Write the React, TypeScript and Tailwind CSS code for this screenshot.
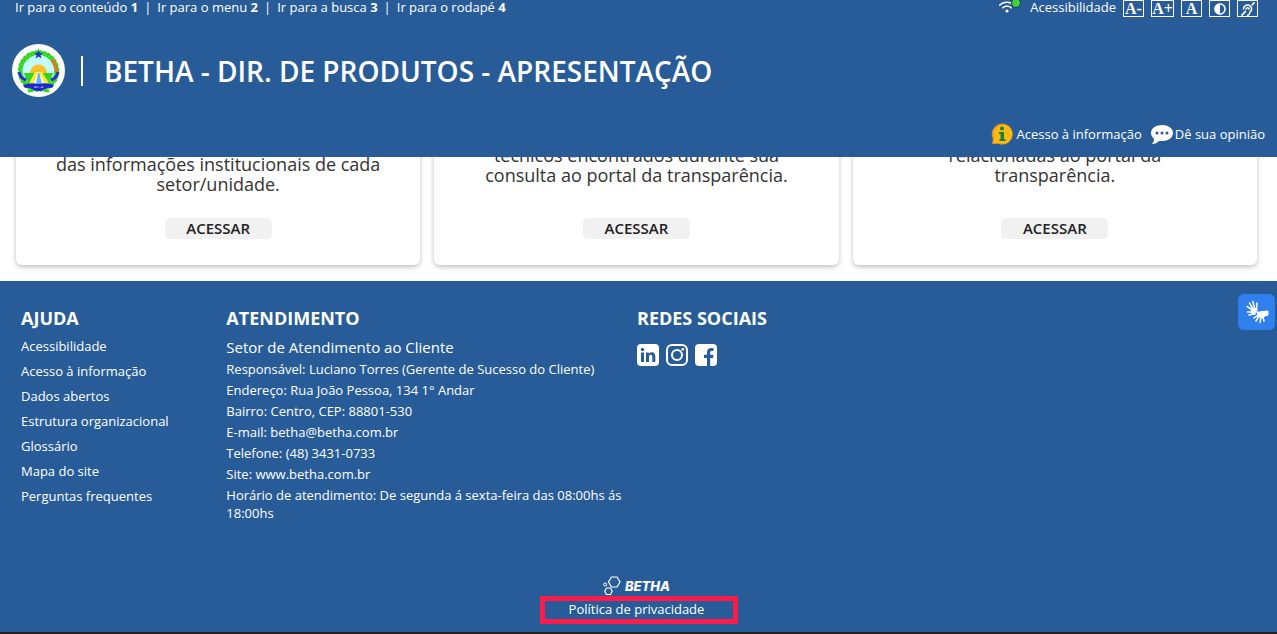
import React from 'react';
import { FaAdjust, FaDeaf } from 'react-icons/fa';
import { FaWifi } from 'react-icons/fa6';

const skipLinks = [
  { label: 'Ir para o conteúdo', key: '1', href: '#conteudo' },
  { label: 'Ir para o menu', key: '2', href: '#menu' },
  { label: 'Ir para a busca', key: '3', href: '#busca' },
  { label: 'Ir para o rodapé', key: '4', href: '#rodape' },
];

const cards = [
  { lines: ['das informações institucionais de cada', 'setor/unidade.'], spacing: 'pt-[13px]' },
  { lines: ['técnicos encontrados durante sua', 'consulta ao portal da transparência.'], spacing: 'pt-1' },
  { lines: ['relacionadas ao portal da', 'transparência.'], spacing: 'pt-1' },
];

const helpLinks = [
  'Acessibilidade',
  'Acesso à informação',
  'Dados abertos',
  'Estrutura organizacional',
  'Glossário',
  'Mapa do site',
  'Perguntas frequentes',
];

const contactLines = [
  'Responsável: Luciano Torres (Gerente de Sucesso do Cliente)',
  'Endereço: Rua João Pessoa, 134 1° Andar',
  'Bairro: Centro, CEP: 88801-530',
  'E-mail: betha@betha.com.br',
  'Telefone: (48) 3431-0733',
  'Site: www.betha.com.br',
  'Horário de atendimento: De segunda á sexta-feira das 08:00hs ás 18:00hs',
];

const Crest = () => (
  <svg viewBox="0 0 53 53" className="w-[53px] h-[53px] shrink-0" aria-hidden="true">
    <circle cx="26.5" cy="26.5" r="26.5" fill="#fff" />
    <circle cx="26.5" cy="27" r="17" fill="#c4fbfb" />
    <path d="M18 29a8.500 8.500 0 0 1 17 0z" fill="#fbc02a" />
    <path d="M12 29h29l-4 12H16z" fill="#34d426" />
    <path d="M25 28h3l8 13H17z" fill="#fff" />
    <path d="M23 28l-6 11 4 1 5-12zM30 28l7 11-4 1-6-12z" fill="#f7ee2c" />
    <path d="M26 29h1.500l2.500 12h-6z" fill="#62b2f5" />
    <circle cx="26.5" cy="27" r="18" fill="none" stroke="#32d622" strokeWidth="4" />
    <circle cx="26.5" cy="27" r="20" fill="none" stroke="#32d622" strokeWidth="1.500" strokeDasharray="3 1.500" />
    <circle cx="26.5" cy="27" r="17.500" fill="none" stroke="#8af07c" strokeWidth="1" strokeDasharray="1 3" />
    <path d="M40 16q5 6 4 12" fill="none" stroke="#e87422" strokeWidth="4" strokeDasharray="3 0.700" />
    <path d="M26.500 6l1.500 3h3l-2.500 2 1 3.500-3-2-3 2 1-3.500-2.500-2h3z" fill="#2434c8" />
    <path d="M26.500 4l1 3h-2z" fill="#32d622" />
    <path d="M7 28q1 6 7 8M46 28q-1 6-7 8" fill="none" stroke="#2433d0" strokeWidth="3" />
    <path d="M11 41q8-3 15.500-1 7.500-2 15.500 1l-2 3q-5-1-8 2-5 2-11 0-3-3-8-2z" fill="#2028d0" />
    <path d="M22 43.500l2-1v1.500M26 42.500v1.500M29 44l1-1.500 1 1.500" fill="none" stroke="#d5dcff" strokeWidth="0.800" />
    <path d="M16 47l5-.5M37 47l-5-.5" stroke="#32d622" strokeWidth="3" />
  </svg>
);

const InfoIcon = () => (
  <svg viewBox="0 0 22 22" className="w-[22px] h-[22px]" aria-hidden="true">
    <path d="M1 21l1-5A10.500 10.500 0 1 1 8 21z" fill="#d9902a" />
    <path d="M2 20l1-5a9.500 9.500 0 1 1 5 5z" fill="#fdb90d" />
    <circle cx="11" cy="5.500" r="2" fill="#168046" />
    <path d="M8 9h5v7h1.500v2h-6v-2H9.500v-5H8z" fill="#168046" />
  </svg>
);

const ChatIcon = () => (
  <svg viewBox="0 0 23 20" className="w-[23px] h-5" aria-hidden="true">
    <path d="M12 1c6 0 11 3 11 8s-5 8-11 8l-3 0c-2 2-4 3-7 3 1-1 2-3 2-5C2 13 1 11 1 9c0-5 5-8 11-8z" fill="#fff" />
    <circle cx="7" cy="9" r="1.500" fill="#285c98" />
    <circle cx="12" cy="9" r="1.500" fill="#285c98" />
    <circle cx="17" cy="9" r="1.500" fill="#285c98" />
  </svg>
);

const LinkedinIcon = () => (
  <svg viewBox="0 0 22 22" className="w-[22px] h-[22px]" aria-hidden="true">
    <rect width="22" height="22" rx="4" fill="#fff" />
    <g fill="#285c98">
      <circle cx="5.500" cy="5.500" r="1.700" />
      <path d="M4 8.500h3V18H4zM9 8.500h2.800v1.300c.7-1 1.600-1.600 3-1.600 2.600 0 3.500 1.700 3.500 4.300V18h-3v-5c0-1.400-.4-2.300-1.500-2.300-1.300 0-1.800 1-1.800 2.300v5H9z" />
    </g>
  </svg>
);

const InstagramIcon = () => (
  <svg viewBox="0 0 22 22" className="w-[22px] h-[22px]" aria-hidden="true" fill="none" stroke="#fff" strokeWidth="2">
    <rect x="1" y="1" width="20" height="20" rx="5" />
    <circle cx="11" cy="11" r="5" />
    <circle cx="16.800" cy="5.200" r="1.300" fill="#fff" stroke="none" />
  </svg>
);

const FacebookIcon = () => (
  <svg viewBox="0 0 22 22" className="w-[22px] h-[22px]" aria-hidden="true">
    <rect width="22" height="22" rx="4" fill="#fff" />
    <path d="M12 22v-8H9v-3.300h3V8.500C12 5.600 13.700 4 16.300 4H18.500v3h-1.600c-1.300 0-1.700.7-1.700 1.700v2h3.300l-.5 3.300h-2.800v8z" fill="#285c98" />
  </svg>
);

const BethaMark = () => (
  <svg viewBox="0 0 18 20" className="w-[18px] h-5" aria-hidden="true" fill="none" stroke="#fff">
    <path d="M8.500 1h5.500l3 5-3 5H8.500L5.500 6z" strokeWidth="1.200" strokeLinejoin="round" />
    <path d="M3.500 12h4l1.800 3.200-1.800 3.300h-4l-1.800-3.300z" strokeWidth="1.200" strokeLinejoin="round" />
    <circle cx="2.200" cy="8.500" r="1.500" />
  </svg>
);

const HandsIcon = () => (
  <svg viewBox="0 0 24 24" className="w-6 h-6" aria-hidden="true" fill="none" stroke="#fff" strokeLinecap="round" strokeLinejoin="round">
    <path d="M6.500 9.500l4-1.500 2 2-2 1.500-.5 3-2.500-.5z" fill="#fff" strokeWidth="1" />
    <path d="M7 9.500L2 6.500M8 9L4.500 3M9.500 8.500L8 1.500M11.500 9l.5-6M7 12H2.500M8 14l-4 1" strokeWidth="1.500" />
    <path d="M13 12.500l4-1 6-.5v4l-3 1-3 2-4-1.500z" fill="#fff" strokeWidth="1" />
    <path d="M14 12.500l-2.500-.5M13 15l-4 3M14 16l-3 5M16 17l-1 5.500M18 17l1 4" strokeWidth="1.500" />
  </svg>
);

const toolButton =
  'flex items-center justify-center h-[17px] border border-white font-["Liberation_Serif",serif] text-base leading-4 font-bold';

const App: React.FC = () => {
  return (
    <div className='flex flex-col min-h-screen font-["Open_Sans",sans-serif] text-sm text-white bg-white'>
      <header className="relative z-10 bg-[#285c98]">
        <div className="flex items-start justify-between pl-[15px] pr-[19px]">
          <nav className="flex text-[13px] leading-[14px]">
            {skipLinks.map((link, i) => (
              <React.Fragment key={link.key}>
                {i > 0 && <span className="px-1.5">|</span>}
                <a href={link.href}>
                  {link.label} <b>{link.key}</b>
                </a>
              </React.Fragment>
            ))}
          </nav>
          <div className="flex items-start gap-[7px] text-[13px] leading-[14px]">
            <span className="relative mr-2">
              <FaWifi className="w-4 h-[14px]" />
              <span className="absolute -top-0.5 -right-1.5 w-2.5 h-2.5 rounded-full border border-[#1c3d5f] bg-[#3fd33f]" />
            </span>
            <a href="#acessibilidade">Acessibilidade</a>
            <button type="button" className={`${toolButton} w-[21px]`}>A-</button>
            <button type="button" className={`${toolButton} w-[23px]`}>A+</button>
            <button type="button" className={`${toolButton} w-[21px]`}>A</button>
            <button type="button" aria-label="Contraste" className={`${toolButton} w-[21px]`}>
              <FaAdjust className="w-3 h-3" />
            </button>
            <button type="button" aria-label="Libras" className={`${toolButton} w-[21px]`}>
              <FaDeaf className="w-[14px] h-[14px]" />
            </button>
          </div>
        </div>
        <div className="flex items-center pt-[27px] pl-3">
          <Crest />
          <span className="w-[2px] h-[30px] ml-4 mr-[21px] bg-white" />
          <h1 className="text-[28px] font-semibold leading-9">BETHA - DIR. DE PRODUTOS - APRESENTAÇÃO</h1>
        </div>
        <div className="flex items-center justify-end gap-2 h-[60px] pt-[14px] pr-3 text-[13px]">
          <a href="#informacao" className="flex items-center gap-1">
            <InfoIcon />
            Acesso à informação
          </a>
          <a href="#opiniao" className="flex items-center gap-0.5">
            <ChatIcon />
            Dê sua opinião
          </a>
        </div>
      </header>

      <main id="conteudo" className="grid grid-cols-3 gap-[14px] -mt-4 pb-4 pl-4 pr-5">
        {cards.map((card) => (
          <article
            key={card.lines[0]}
            className={`flex flex-col items-center h-[124px] pb-[26px] text-center text-lg leading-5 text-[#333] rounded-md shadow-[0_2px_5px_rgba(0,0,0,0.25)] ${card.spacing}`}
          >
            <p>
              {card.lines.map((line) => (
                <span key={line} className="block">{line}</span>
              ))}
            </p>
            <button
              type="button"
              className="w-[107px] h-[21px] mt-auto pb-0.5 shrink-0 rounded-[5px] bg-[#f1f1f1] text-[15px] leading-5 font-semibold text-[#222]"
            >
              ACESSAR
            </button>
          </article>
        ))}
      </main>

      <footer id="rodape" className="flex flex-col flex-1 bg-[#285c98] border-b-2 border-[#222]">
        <div className="grid grid-cols-6 pl-[21px] pr-6 pt-6 text-[13px]">
          <section>
            <h2 className="text-lg font-bold leading-[26px]">AJUDA</h2>
            <ul className="pt-[3px] leading-[25px]">
              {helpLinks.map((label) => (
                <li key={label}>
                  <a href="#ajuda">{label}</a>
                </li>
              ))}
            </ul>
          </section>
          <section className="col-span-2">
            <h2 className="text-lg font-bold leading-[26px]">ATENDIMENTO</h2>
            <h3 className="pt-[3px] text-[15px] leading-[26px]">Setor de Atendimento ao Cliente</h3>
            <div className="flex flex-col gap-[3px] leading-[18px]">
              {contactLines.map((line) => (
                <p key={line}>{line}</p>
              ))}
            </div>
          </section>
          <section>
            <h2 className="text-lg font-bold leading-[26px]">REDES SOCIAIS</h2>
            <div className="flex gap-[7px] pt-[13px]">
              <a href="#linkedin" aria-label="LinkedIn"><LinkedinIcon /></a>
              <a href="#instagram" aria-label="Instagram"><InstagramIcon /></a>
              <a href="#facebook" aria-label="Facebook"><FacebookIcon /></a>
            </div>
          </section>
        </div>
        <div className="flex flex-col items-center mt-auto pb-2">
          <a href="#betha" className='flex items-center gap-1 pr-1 font-["Inter",sans-serif] text-[13px] leading-5 font-extrabold italic'>
            <BethaMark />
            BETHA
          </a>
          <div className="flex justify-center w-[198px] pr-1 pb-0.5 border-[5px] border-[#fc1b4b] text-[13px] leading-4">
            <a href="#privacidade">Política de privacidade</a>
          </div>
        </div>
      </footer>

      <button
        type="button"
        aria-label="Tradutor de Libras"
        className="fixed top-[294px] right-[2px] z-20 flex items-center justify-center w-[37px] h-9 rounded-md bg-[#2f80ed]"
      >
        <HandsIcon />
      </button>
    </div>
  );
};

export default App;
